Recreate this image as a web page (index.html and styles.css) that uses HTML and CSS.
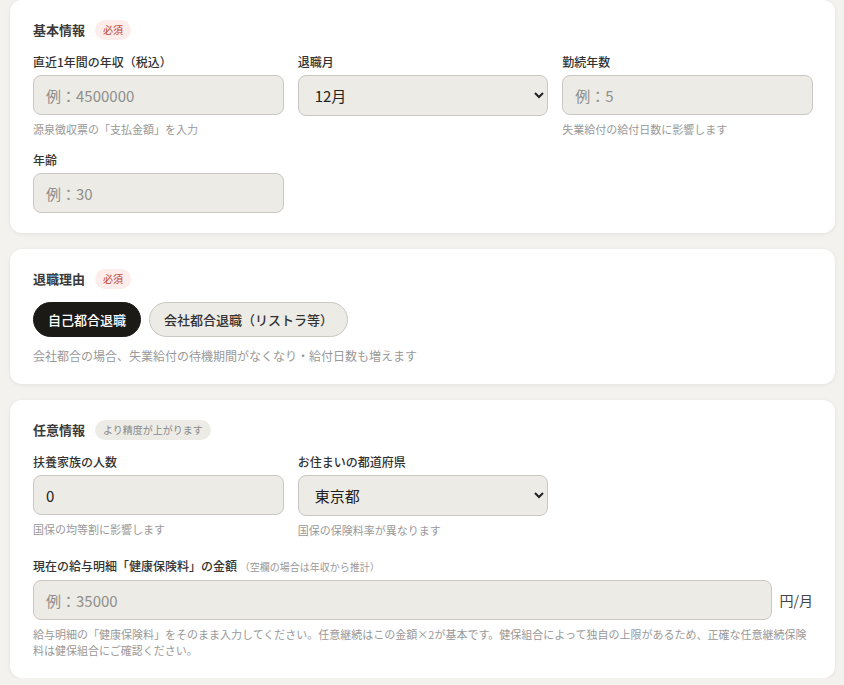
FILE: index.html
```html
<!DOCTYPE html>
<html lang="ja">

<head>
    <meta charset="UTF-8" />
    <meta name="viewport" content="width=device-width, initial-scale=1.0" />
    <title>失業給付・保険料シミュレーター</title>
    <link rel="stylesheet" href="styles.css">
</head>

<body>
    <main class="page">
        <section class="card">
            <h2 class="card-title">基本情報 <span class="badge required">必須</span></h2>
            <div class="field-grid">
                <div class="field">
                    <label class="field-label">直近1年間の年収（税込）</label>
                    <input class="text-input" type="text" placeholder="例：4500000">
                    <p class="help">源泉徴収票の「支払金額」を入力</p>
                </div>
                <div class="field">
                    <label class="field-label">退職月</label>
                    <select class="select-input">
                        <option>1月</option>
                        <option>2月</option>
                        <option>3月</option>
                        <option>4月</option>
                        <option>5月</option>
                        <option>6月</option>
                        <option>7月</option>
                        <option>8月</option>
                        <option>9月</option>
                        <option>10月</option>
                        <option>11月</option>
                        <option selected>12月</option>
                    </select>
                </div>
                <div class="field">
                    <label class="field-label">勤続年数</label>
                    <input class="text-input" type="text" placeholder="例：5">
                    <p class="help">失業給付の給付日数に影響します</p>
                </div>
                <div class="field">
                    <label class="field-label">年齢</label>
                    <input class="text-input" type="text" placeholder="例：30">
                </div>
            </div>
        </section>

        <section class="card">
            <h2 class="card-title">退職理由 <span class="badge required">必須</span></h2>
            <div class="choice-row">
                <button class="choice active">自己都合退職</button>
                <button class="choice">会社都合退職（リストラ等）</button>
            </div>
            <p class="help help-lg">会社都合の場合、失業給付の待機期間がなくなり・給付日数も増えます</p>
        </section>

        <section class="card">
            <h2 class="card-title">任意情報 <span class="badge optional">より精度が上がります</span></h2>
            <div class="field-grid">
                <div class="field">
                    <label class="field-label">扶養家族の人数</label>
                    <input class="text-input" type="text" value="0">
                    <p class="help">国保の均等割に影響します</p>
                </div>
                <div class="field">
                    <label class="field-label">お住まいの都道府県</label>
                    <select class="select-input">
                        <option>北海道</option>
                        <option>神奈川県</option>
                        <option selected>東京都</option>
                        <option>大阪府</option>
                    </select>
                    <p class="help">国保の保険料率が異なります</p>
                </div>
                <div class="field field-wide">
                    <label class="field-label">現在の給与明細「健康保険料」の金額 <span class="label-note">（空欄の場合は年収から推計）</span></label>
                    <div class="unit-row">
                        <input class="text-input" type="text" placeholder="例：35000">
                        <span class="unit">円/月</span>
                    </div>
                    <p class="help">給与明細の「健康保険料」をそのまま入力してください。任意継続はこの金額×2が基本です。健保組合によって独自の上限があるため、正確な任意継続保険料は健保組合にご確認ください。</p>
                </div>
            </div>
        </section>
    </main>
</body>

</html>
```

FILE: styles.css
```css
* {
    margin: 0;
    padding: 0;
    box-sizing: border-box;
    font-family: 'Noto Sans CJK JP', 'Noto Sans', sans-serif;
}

body {
    background: #f3f2ef;
    color: #333;
}

.page {
    display: flex;
    flex-direction: column;
    gap: 16px;
    padding: 0 9px 0 10px;
}

.card {
    background: #fff;
    border-radius: 12px;
    box-shadow: 0 1px 4px rgba(0, 0, 0, 0.07);
    padding: 19px 22px 20px 23px;
}

.card-title {
    display: flex;
    align-items: center;
    gap: 10px;
    font-size: 13px;
    font-weight: 700;
    color: #3a3a3a;
    line-height: 22px;
    margin-bottom: 12px;
}

.badge {
    font-size: 10px;
    font-weight: 400;
    line-height: 20px;
    padding: 0 8px;
    border-radius: 10px;
}

.badge.required {
    background: #fcecea;
    color: #c0452f;
}

.badge.optional {
    background: #ecebe6;
    color: #8a8a8a;
}

.field-grid {
    display: grid;
    grid-template-columns: repeat(3, 1fr);
    column-gap: 14px;
    row-gap: 14px;
}

.field-wide {
    grid-column: 1 / -1;
    margin-top: 5px;
}

.field-label {
    display: block;
    font-size: 12px;
    font-weight: 500;
    color: #333;
    line-height: 18px;
    margin-bottom: 4px;
}

.label-note {
    font-size: 10px;
    font-weight: 400;
    color: #999;
}

.text-input,
.select-input {
    width: 100%;
    height: 40px;
    background: #ecebe6;
    border: 1px solid #c9c7c1;
    border-radius: 8px;
    padding: 0 12px;
    font-size: 15px;
    color: #222;
}

.text-input::placeholder {
    color: #8f8f8c;
}

.select-input {
    height: 41px;
    padding-left: 12px;
}

.help {
    font-size: 11px;
    color: #999;
    line-height: 16px;
    margin-top: 6px;
}

.help-lg {
    font-size: 12px;
    margin-top: 11px;
}

.unit-row {
    display: flex;
    align-items: center;
    gap: 8px;
}

.unit {
    font-size: 14px;
    color: #444;
    white-space: nowrap;
}

.choice-row {
    display: flex;
    gap: 8px;
}

.choice {
    height: 35px;
    padding: 0 14px;
    border-radius: 18px;
    border: 1px solid #c9c7c1;
    background: #ecebe6;
    color: #333;
    font-size: 13px;
    font-weight: 500;
    cursor: pointer;
}

.choice.active {
    background: #1c1a17;
    border-color: #1c1a17;
    color: #fff;
}
```
